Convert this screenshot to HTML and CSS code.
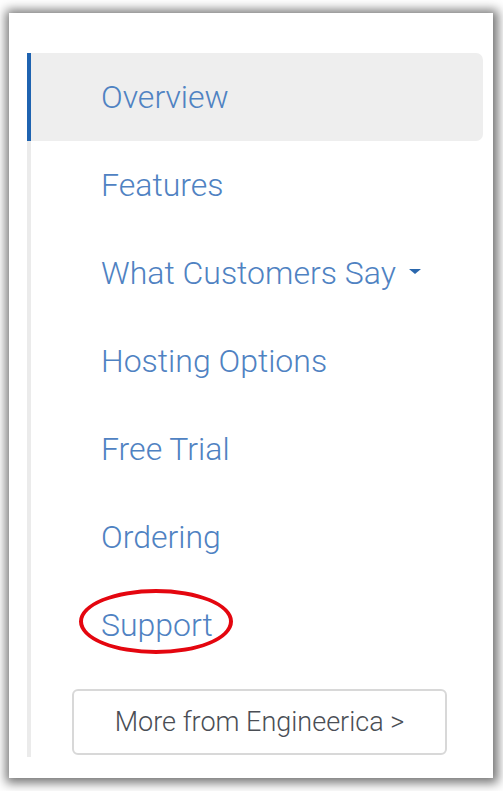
FILE: index.html
```html
<!DOCTYPE html>
<html lang="en">
<head>
<meta charset="utf-8">
<title>Product navigation</title>
<link rel="stylesheet" href="styles.css">
</head>
<body>
<div class="card">
  <nav class="side-nav">
    <ul class="nav-list">
      <li class="nav-item active"><a href="#">Overview</a></li>
      <li class="nav-item"><a href="#">Features</a></li>
      <li class="nav-item"><a href="#">What Customers Say<span class="caret"></span></a></li>
      <li class="nav-item"><a href="#">Hosting Options</a></li>
      <li class="nav-item"><a href="#">Free Trial</a></li>
      <li class="nav-item"><a href="#">Ordering</a></li>
      <li class="nav-item marked"><a href="#">Support</a><span class="ring"></span></li>
    </ul>
    <a class="more-btn" href="#">More from Engineerica &gt;</a>
  </nav>
</div>
</body>
</html>
```
FILE: styles.css
```css
html, body {
  margin: 0;
  padding: 0;
  background: #ffffff;
}

body {
  width: 503px;
  height: 791px;
  overflow: hidden;
  font-family: Roboto, "Open Sans", sans-serif;
}

.card {
  box-sizing: border-box;
  margin: 13px 0 0 9px;
  width: 484px;
  height: 765px;
  background: #ffffff;
  box-shadow: 1px 1px 10px 4px rgba(0, 0, 0, 0.55);
  padding: 40px 10px 0 18px;
}

.side-nav {
  border-left: 4px solid #ebebeb;
  padding-bottom: 2px;
}

.nav-list {
  list-style: none;
  margin: 0;
  padding: 0;
}

.nav-item {
  position: relative;
  height: 88px;
  line-height: 88px;
}

.nav-item a {
  display: block;
  padding-left: 70px;
  font-size: 32px;
  font-weight: 300;
  color: #4f82c2;
  text-decoration: none;
  white-space: nowrap;
}

.nav-item.active {
  margin-left: -4px;
  border-left: 4px solid #1f63b0;
  background: #eeeeee;
  border-radius: 0 7px 7px 0;
}

.caret {
  display: inline-block;
  margin-left: 13px;
  width: 0;
  height: 0;
  border-left: 6px solid transparent;
  border-right: 6px solid transparent;
  border-top: 5px solid #2a67ad;
  vertical-align: 10px;
}

.ring {
  position: absolute;
  left: 48px;
  top: 8px;
  box-sizing: border-box;
  width: 154px;
  height: 65px;
  border: 4px solid #e4060f;
  border-radius: 50%;
  pointer-events: none;
}

.more-btn {
  box-sizing: border-box;
  display: flex;
  align-items: center;
  justify-content: center;
  margin: 20px 0 0 41px;
  width: 375px;
  height: 66px;
  border: 2px solid #d8d8d8;
  border-radius: 6px;
  font-size: 27px;
  font-weight: 300;
  color: #4a4e55;
  text-decoration: none;
}
```
